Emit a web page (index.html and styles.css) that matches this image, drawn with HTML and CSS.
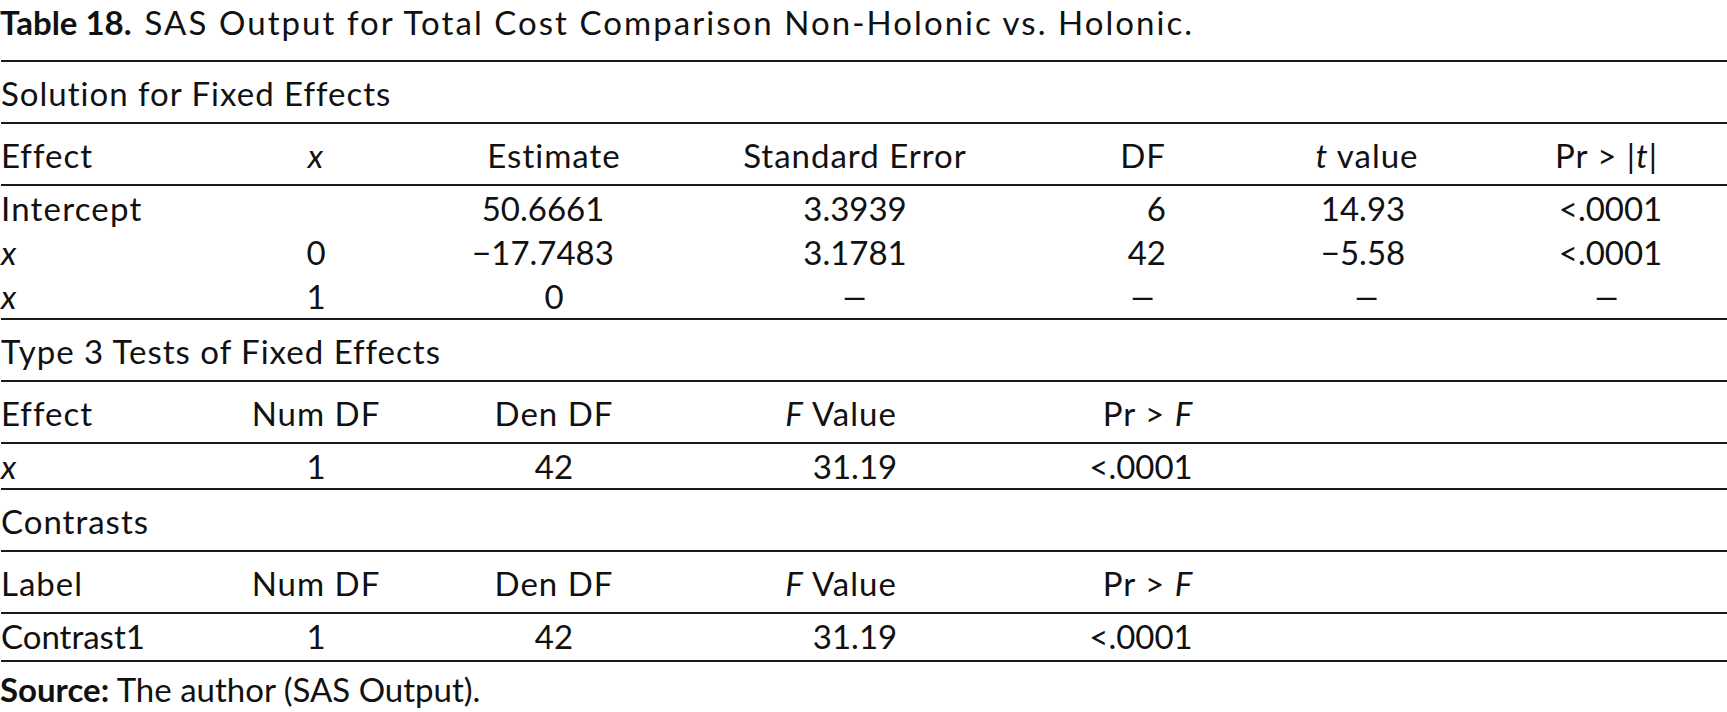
FILE: index.html
```html
<!DOCTYPE html>
<html lang="en">
<head>
<meta charset="utf-8">
<title>Table 18</title>
<link rel="stylesheet" href="styles.css">
</head>
<body>
<div class="page">
  <p class="caption"><b>Table 18.</b><span class="gap"></span><span class="ctext">SAS Output for Total Cost Comparison Non-Holonic vs. Holonic.</span></p>
  <div class="table">
    <div class="sec">Solution for Fixed Effects</div>
    <div class="row head">
      <span class="l">Effect</span>
      <span><i>x</i></span>
      <span>Estimate</span>
      <span>Standard Error</span>
      <span class="df">DF</span>
      <span><i>t</i> value</span>
      <span>Pr &gt; |<i>t</i>|</span>
    </div>
    <div class="group">
      <div class="row">
        <span class="l wide">Intercept</span>
        <span></span>
        <span class="dec">50.6661</span>
        <span>3.3939</span>
        <span class="df">6</span>
        <span class="tv">14.93</span>
        <span class="pr">&lt;.0001</span>
      </div>
      <div class="row">
        <span class="l"><i>x</i></span>
        <span>0</span>
        <span class="dec">&minus;17.7483</span>
        <span>3.1781</span>
        <span class="df">42</span>
        <span class="tv">&minus;5.58</span>
        <span class="pr">&lt;.0001</span>
      </div>
      <div class="row">
        <span class="l"><i>x</i></span>
        <span>1</span>
        <span>0</span>
        <span><span class="dash">&ndash;</span></span>
        <span class="df dashcell"><span class="dash">&ndash;</span></span>
        <span><span class="dash">&ndash;</span></span>
        <span><span class="dash">&ndash;</span></span>
      </div>
    </div>

    <div class="sec">Type 3 Tests of Fixed Effects</div>
    <div class="row head">
      <span class="l">Effect</span>
      <span>Num DF</span>
      <span>Den DF</span>
      <span class="fh"><i>F</i> Value</span>
      <span><span class="ph">Pr &gt; <i>F</i></span></span>
      <span></span>
      <span></span>
    </div>
    <div class="group">
      <div class="row">
        <span class="l"><i>x</i></span>
        <span>1</span>
        <span>42</span>
        <span>31.19</span>
        <span>&lt;.0001</span>
        <span></span>
        <span></span>
      </div>
    </div>

    <div class="sec">Contrasts</div>
    <div class="row head">
      <span class="l">Label</span>
      <span>Num DF</span>
      <span>Den DF</span>
      <span class="fh"><i>F</i> Value</span>
      <span><span class="ph">Pr &gt; <i>F</i></span></span>
      <span></span>
      <span></span>
    </div>
    <div class="group last">
      <div class="row">
        <span class="l">Contrast1</span>
        <span>1</span>
        <span>42</span>
        <span>31.19</span>
        <span>&lt;.0001</span>
        <span></span>
        <span></span>
      </div>
    </div>
  </div>
  <p class="source"><b>Source:</b> The author (SAS Output).</p>
</div>
</body>
</html>
```

FILE: styles.css
```css
html, body {
  margin: 0;
  padding: 0;
  background: #ffffff;
}

body {
  font-family: "Lato", "Open Sans", sans-serif;
  font-size: 33px;
  color: #111111;
}

.page {
  width: 1727px;
  overflow: hidden;
}

.caption {
  margin: 0 0 15.6px 0;
  line-height: 44px;
  white-space: nowrap;
}

.caption b {
  font-weight: 700;
}

.ctext {
  letter-spacing: 2.05px;
}

.gap {
  display: inline-block;
  width: 13px;
}

.table {
  margin-left: 1px;
  border-top: 2px solid #1a1a1a;
}

.sec {
  padding: 9px 0 7px 0;
  line-height: 44px;
  letter-spacing: 1px;
  border-bottom: 2px solid #1a1a1a;
}

.row {
  display: grid;
  grid-template-columns: 199px 232px 244px 358px 214px 238px 1fr;
  line-height: 44px;
}

.row > span {
  text-align: center;
  white-space: nowrap;
}

.row > span.l {
  text-align: left;
}

.head {
  padding: 9px 0 7px 0;
  letter-spacing: 1px;
  border-bottom: 2px solid #1a1a1a;
}

.wide {
  letter-spacing: 1.2px;
}

.group {
  border-bottom: 2px solid #1a1a1a;
}

.group.last {
  padding-bottom: 2px;
}

.df {
  text-align: right !important;
  padding-right: 82px;
}

.df.dashcell {
  padding-right: 96px;
}

.dash {
  display: inline-block;
  transform: scaleX(1.5);
}

.dec {
  padding-right: 22px;
}

.tv {
  padding-right: 8px;
}

.pr {
  padding-left: 8px;
}

.fh {
  padding-right: 28px;
}

.ph {
  display: inline-block;
  padding-left: 14px;
}

.source {
  margin: 5px 0 0 0;
  line-height: 44px;
}
```
